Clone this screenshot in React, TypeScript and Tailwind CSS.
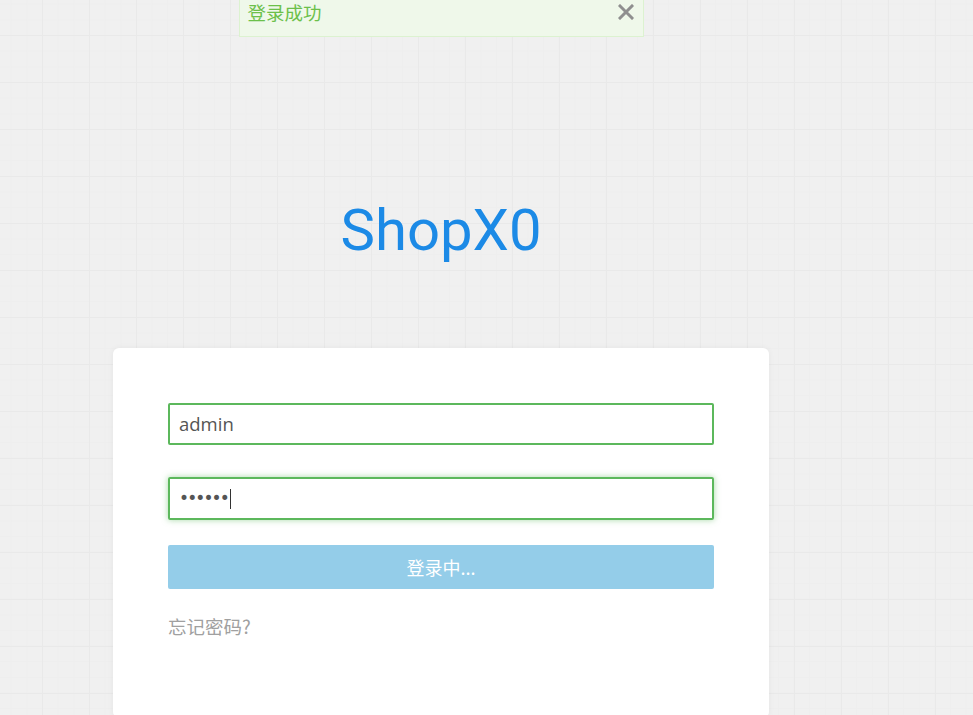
import React from "react";

export default function App() {
  return (
    <div
      className="min-h-[715px] w-full overflow-hidden bg-[#f0f0f0] [background-image:linear-gradient(to_right,#e9e9e9_1px,transparent_1px),linear-gradient(to_bottom,#e9e9e9_1px,transparent_1px),linear-gradient(to_right,#eeeeee_1px,transparent_1px),linear-gradient(to_bottom,#eeeeee_1px,transparent_1px)] [background-size:47px_47px,47px_47px,15.667px_15.667px,15.667px_15.667px] [background-position:42px_35px,42px_35px,42px_35px,42px_35px]"
      style={{ fontFamily: '"Open Sans", "Noto Sans CJK SC", sans-serif' }}
    >
      <div className="flex w-[882px] flex-col items-center">
        <div className="flex h-[37px] w-[405px] items-start justify-between border border-t-0 border-[#dcf2d0] bg-[#eff8ea] pl-[8px] pr-[9px]">
          <span className="text-[18.5px] leading-[24px] text-[#6cc04a]" style={{ fontFamily: '"Noto Sans CJK SC", sans-serif' }}>
            登录成功
          </span>
          <svg width="16" height="16" viewBox="0 0 16 16" className="mt-[4px]">
            <path d="M2 2 L14 14 M14 2 L2 14" stroke="#8f8f8f" strokeWidth="3" strokeLinecap="square" />
          </svg>
        </div>

        <div
          className="mt-[160px] text-[58px] leading-[66px] text-[#1c8ae6]"
          style={{ fontFamily: 'Roboto, "Noto Sans", sans-serif' }}
        >
          ShopX0
        </div>

        <div className="mt-[85px] flex w-[656px] flex-col rounded-[6px] bg-white px-[55px] pt-[55px] pb-[80px] shadow-[0_0_6px_rgba(0,0,0,0.05)]">
          <div className="flex h-[42px] items-center rounded-[2px] border-2 border-[#5cb85c] px-[9px] text-[18.5px] text-[#555]">
            admin
          </div>
          <div className="mt-[32px] flex h-[43px] items-center rounded-[2px] border-2 border-[#5cb85c] px-[9px] text-[#555] shadow-[0_0_6px_rgba(92,184,92,0.55)]">
            <span className="tracking-[-1.9px]" style={{ fontFamily: '"DejaVu Sans", sans-serif', fontSize: 17 }}>
              ••••••
            </span>
            <span className="ml-[2px] h-[20px] w-[1px] bg-[#333]" />
          </div>
          <div
            className="mt-[25px] flex h-[44px] items-center justify-center rounded-[2px] bg-[#94cde9] text-[18px] text-white"
            style={{ fontFamily: '"Noto Sans CJK SC", sans-serif' }}
          >
            登录中...
          </div>
          <div
            className="mt-[25px] text-[18.5px] leading-[24px] text-[#a0a0a0]"
            style={{ fontFamily: '"Noto Sans CJK SC", sans-serif' }}
          >
            忘记密码?
          </div>
        </div>
      </div>
    </div>
  );
}
